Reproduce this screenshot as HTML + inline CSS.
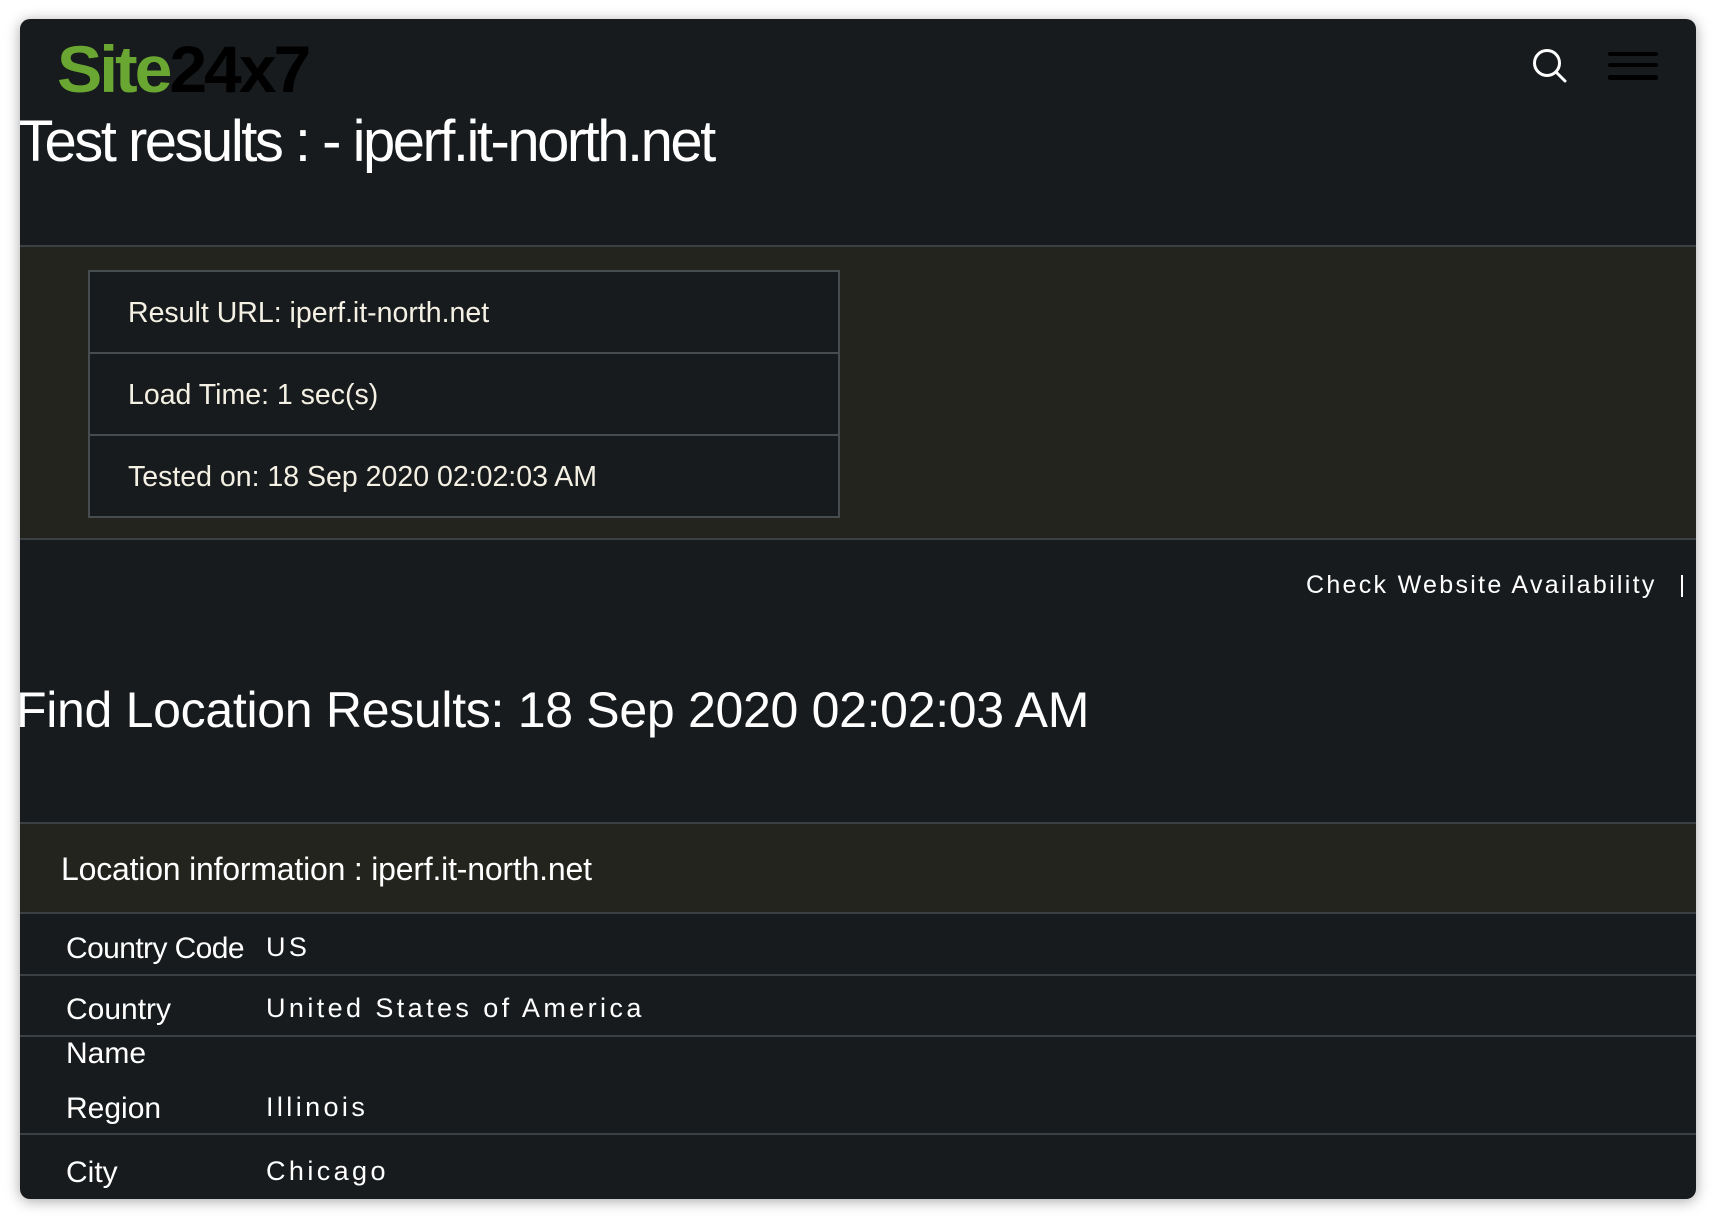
<!DOCTYPE html>
<html><head><meta charset="utf-8"><style>
html,body{margin:0;padding:0;background:#fff;width:1716px;height:1220px;overflow:hidden;font-family:"Liberation Sans",sans-serif;color:#fff}
.card{position:absolute;left:20px;top:19px;width:1676px;height:1180px;background:#181b1d;border-radius:10px;box-shadow:0 2px 14px rgba(0,0,0,.35);overflow:hidden}
.abs{position:absolute;white-space:nowrap}
.logo{left:37px;top:12px;font-size:66px;font-weight:bold;letter-spacing:-3px;transform:scaleX(1.03);transform-origin:left}
.title{left:-2px;top:89px;font-size:58px;letter-spacing:-2.5px;transform:scaleX(1.0);transform-origin:left}
.band{position:absolute;left:0;width:100%;background:#22241d;border-top:2px solid #3a4044;border-bottom:2px solid #3a4044}
.box{position:absolute;left:68px;top:251px;width:748px;border:2px solid #464c50;background:#181b1d}
.box div{height:80px;line-height:82px;padding-left:38px;font-size:28.5px;border-top:2px solid #464c50;color:#f4f1e4}
.box div:first-child{border-top:none}
.row{position:absolute;left:0;width:100%;border-top:2px solid #3a4044}
.lab{position:absolute;left:46px;font-size:30px}
.val{position:absolute;left:246px;font-size:27px;letter-spacing:3.4px}
</style></head><body>
<div class="card">
  <div class="abs logo"><span style="color:#69a732">Site</span><span style="color:#000">24x7</span></div>
  <svg class="abs" style="left:1512px;top:29px" width="38" height="38" viewBox="0 0 38 38"><circle cx="15" cy="15" r="12.5" fill="none" stroke="#fff" stroke-width="3"/><line x1="24" y1="24" x2="33" y2="33" stroke="#fff" stroke-width="3" stroke-linecap="round"/></svg>
  <div class="abs" style="left:1588px;top:33px;width:50px;height:4px;background:#000;border-radius:2px"></div>
  <div class="abs" style="left:1588px;top:44px;width:50px;height:4px;background:#000;border-radius:2px"></div>
  <div class="abs" style="left:1588px;top:56px;width:50px;height:5px;background:#000;border-radius:2px"></div>
  <div class="abs title">Test results : - iperf.it-north.net</div>
  <div class="band" style="top:226px;height:291px"></div>
  <div class="box"><div>Result URL: iperf.it-north.net</div><div>Load Time: 1 sec(s)</div><div>Tested on: 18 Sep 2020 02:02:03 AM</div></div>
  <div class="abs" style="left:1286px;top:552px;font-size:25px;letter-spacing:2.3px">Check Website Availability</div>
  <div class="abs" style="left:1661px;top:556px;width:2px;height:22px;background:#fff"></div>
  <div class="abs" style="left:-4px;top:662px;font-size:50px;letter-spacing:-.3px">Find Location Results: 18 Sep 2020 02:02:03 AM</div>
  <div class="band" style="top:803px;height:88px"></div>
  <div class="abs" style="left:41px;top:832px;font-size:32px;letter-spacing:-.2px">Location information : iperf.it-north.net</div>
  <div class="row" style="top:955px"></div>
  <div class="row" style="top:1016px"></div>
  <div class="row" style="top:1114px"></div>
  <div class="lab" style="top:913px;letter-spacing:-.6px">Country Code</div><div class="val" style="left:246px;top:913px">US</div>
  <div class="lab" style="top:974px">Country</div><div class="val" style="top:974px">United States of America</div>
  <div class="lab" style="top:1018px">Name</div>
  <div class="lab" style="top:1073px">Region</div><div class="val" style="top:1073px">Illinois</div>
  <div class="lab" style="top:1137px">City</div><div class="val" style="top:1137px">Chicago</div>
</div>
</body></html>
